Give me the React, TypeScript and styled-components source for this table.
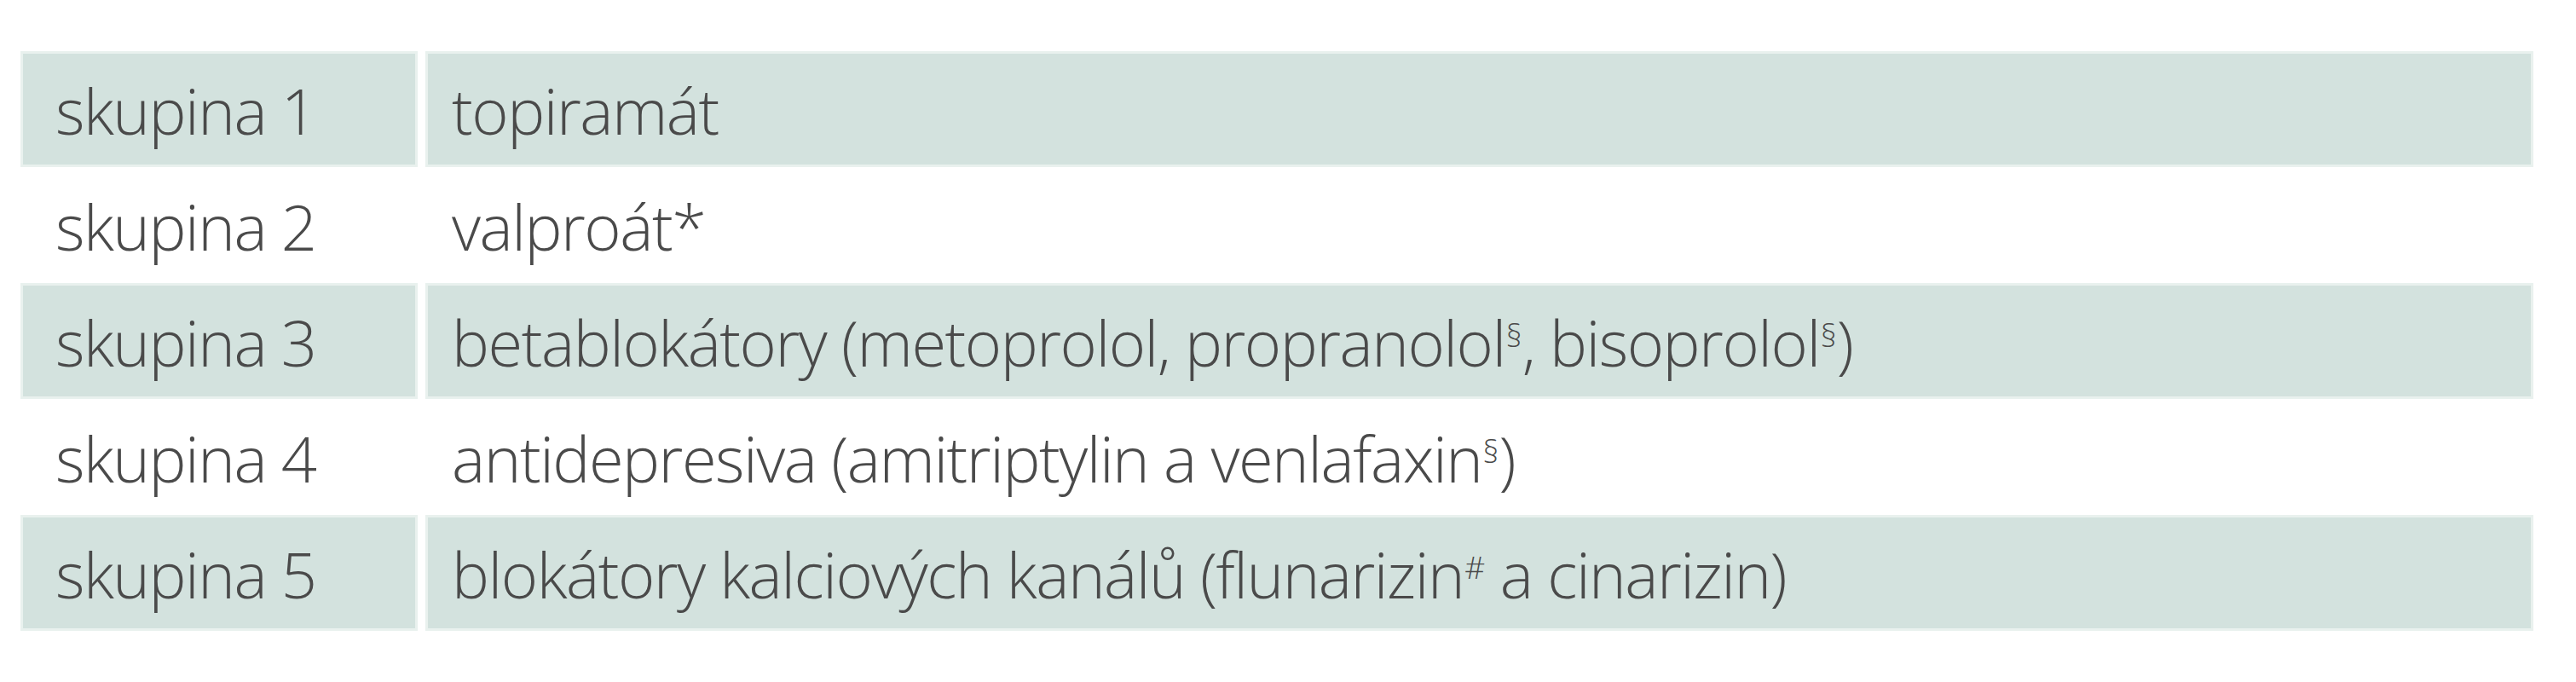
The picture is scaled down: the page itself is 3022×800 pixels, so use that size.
import React from 'react';
import styled, { createGlobalStyle } from 'styled-components';

const GlobalStyle = createGlobalStyle`
  html, body {
    margin: 0;
    padding: 0;
    background: #ffffff;
  }
`;

const Page = styled.div`
  padding: 60px 50px 0 24px;
  font-family: 'Open Sans', 'Noto Sans', sans-serif;
`;

const Table = styled.div`
  display: grid;
  grid-template-columns: 466px 1fr;
  column-gap: 9px;
`;

const Cell = styled.div<{ $shaded: boolean }>`
  height: 136px;
  box-sizing: border-box;
  display: flex;
  align-items: center;
  padding: 4px 0 0 38px;
  background: ${p => (p.$shaded ? '#d3e2de' : '#ffffff')};
  border: 3px solid ${p => (p.$shaded ? '#e9f1ee' : '#ffffff')};

  &:nth-child(2n) {
    padding-left: 28px;
  }
`;

const Text = styled.span`
  font-size: 74px;
  font-weight: 300;
  line-height: 1;
  letter-spacing: -1.5px;
  color: #4a4a4a;
  white-space: nowrap;
`;

const Sup = styled.span`
  font-size: 0.5em;
  vertical-align: 0.62em;
  letter-spacing: 0;
  margin-left: 1px;
`;

interface Row {
  group: string;
  drugs: React.ReactNode;
}

const rows: Row[] = [
  { group: 'skupina 1', drugs: 'topiramát' },
  { group: 'skupina 2', drugs: 'valproát*' },
  {
    group: 'skupina 3',
    drugs: (
      <>
        betablokátory (metoprolol, propranolol<Sup>§</Sup>, bisoprolol<Sup>§</Sup>)
      </>
    ),
  },
  {
    group: 'skupina 4',
    drugs: (
      <>
        antidepresiva (amitriptylin a venlafaxin<Sup>§</Sup>)
      </>
    ),
  },
  {
    group: 'skupina 5',
    drugs: (
      <>
        blokátory kalciových kanálů (flunarizin<Sup>#</Sup>{' '}a cinarizin)
      </>
    ),
  },
];

const App: React.FC = () => (
  <>
    <GlobalStyle />
    <Page>
      <Table>
        {rows.map((row, i) => (
          <React.Fragment key={row.group}>
            <Cell $shaded={i % 2 === 0}>
              <Text>{row.group}</Text>
            </Cell>
            <Cell $shaded={i % 2 === 0}>
              <Text>{row.drugs}</Text>
            </Cell>
          </React.Fragment>
        ))}
      </Table>
    </Page>
  </>
);

export default App;
